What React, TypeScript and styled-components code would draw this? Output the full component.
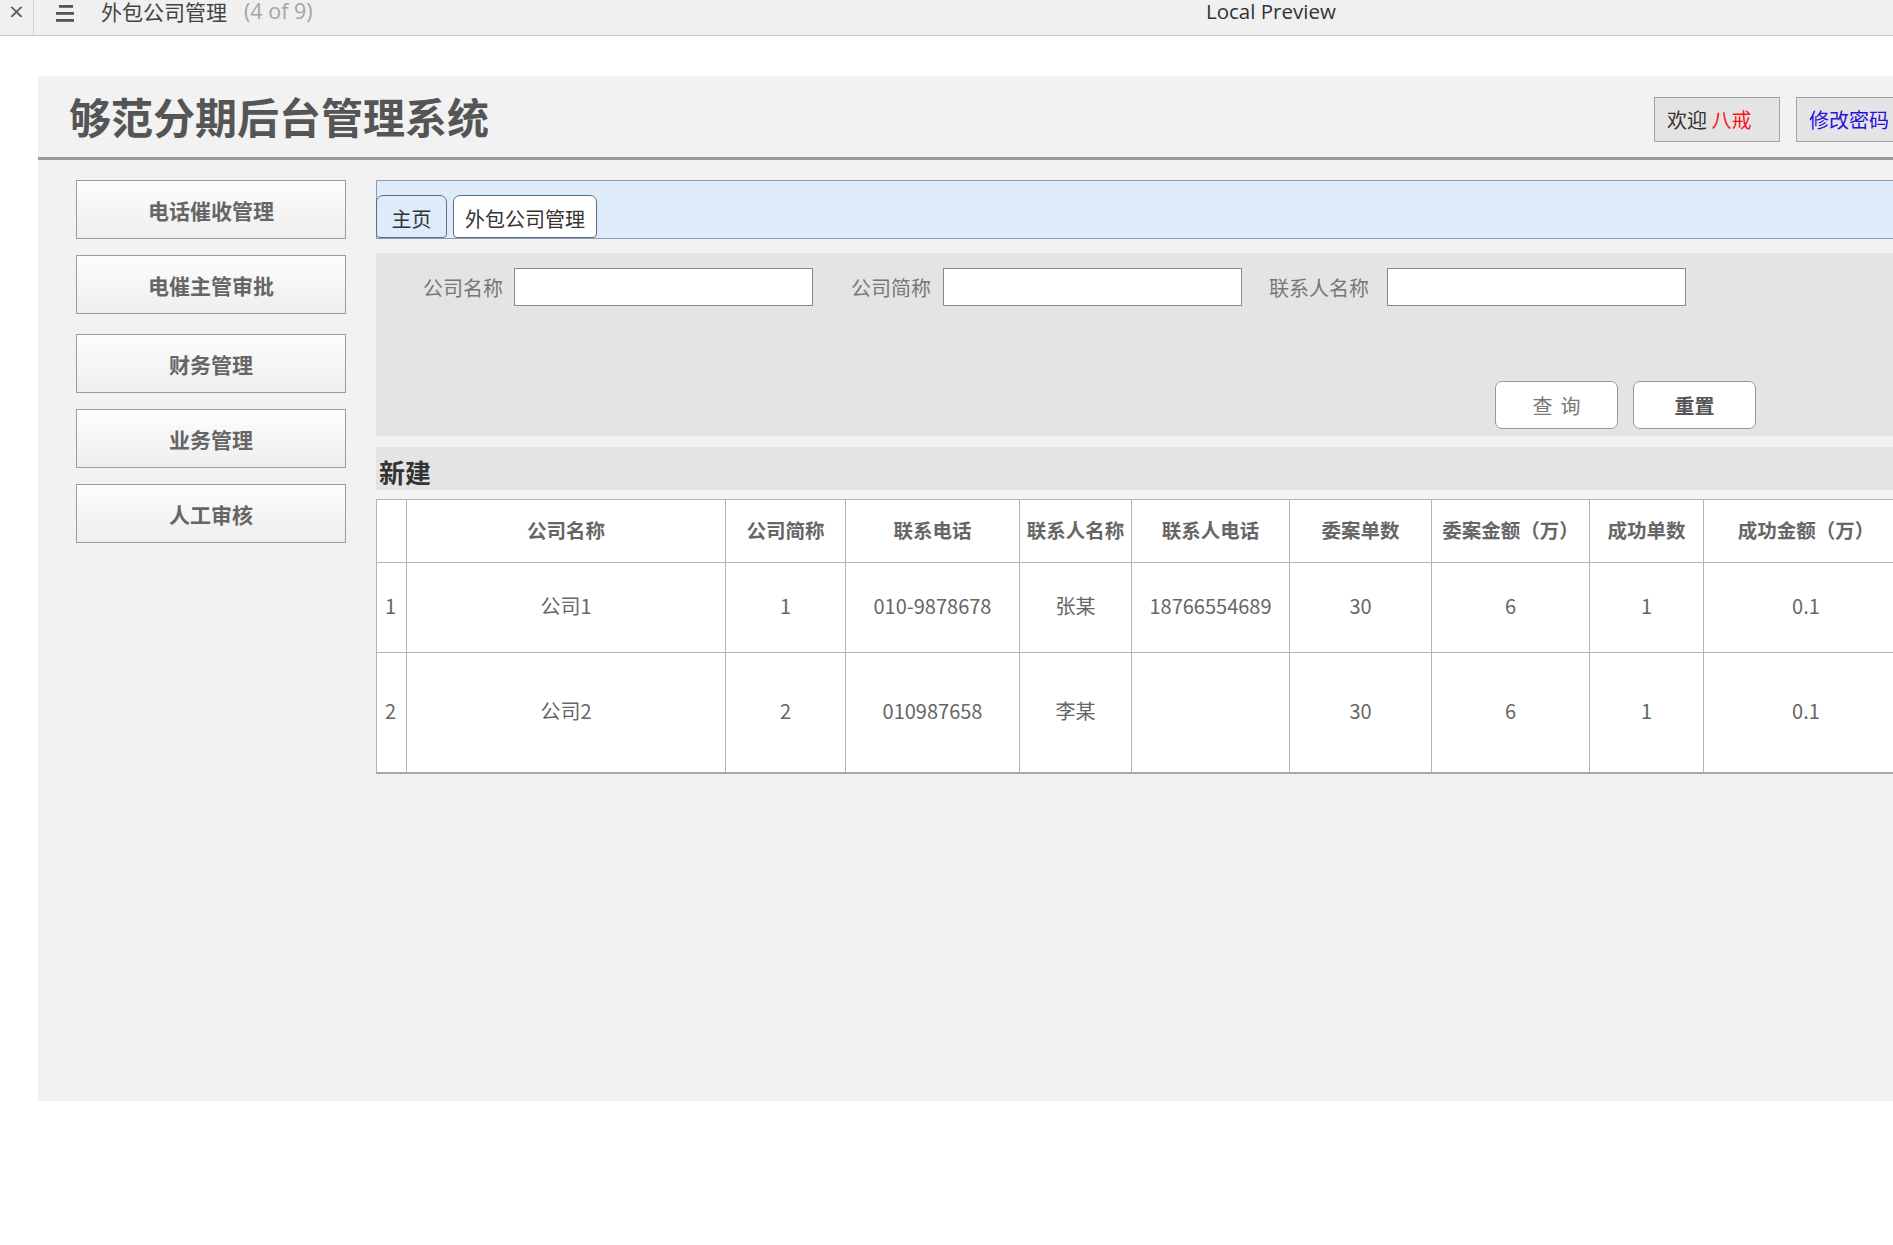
import React from "react";
import styled, { createGlobalStyle } from "styled-components";

const GlobalStyle = createGlobalStyle`
  html, body {
    margin: 0;
    padding: 0;
    background: #ffffff;
    overflow: hidden;
  }
  body {
    font-family: "Noto Sans CJK SC", "Noto Sans", sans-serif;
  }
  * { box-sizing: border-box; }
`;

const Page = styled.div`
  width: 1942px;
  min-height: 1245px;
  background: #ffffff;
`;

/* ---------- browser preview bar ---------- */
const PreviewBar = styled.div`
  height: 36px;
  background: #f0f0f0;
  border-bottom: 1px solid #c9c9c9;
  display: flex;
  align-items: flex-start;
  width: 1893px;
`;

const LeftGroup = styled.div`
  flex: 0 0 1206px;
  display: flex;
  align-items: flex-start;
  height: 35px;
`;

const CloseCell = styled.div`
  width: 34px;
  height: 35px;
  border-right: 1px solid #d2d2d2;
  font-family: "DejaVu Sans", sans-serif;
  font-size: 20px;
  line-height: 20px;
  color: #555;
  text-align: center;
  padding-top: 1px;
`;

const MenuIcon = styled.svg`
  margin-left: 21px;
  margin-top: 4px;
  flex: 0 0 auto;
`;

const PreviewTitle = styled.span`
  margin-left: 26px;
  margin-top: 0px;
  font-size: 21px;
  line-height: 22px;
  color: #444;
`;

const PreviewCount = styled.span`
  margin-left: 17px;
  margin-top: 0px;
  font-family: "Open Sans", "Noto Sans", sans-serif;
  font-size: 21.5px;
  line-height: 22px;
  color: #a4a4a4;
`;

const LocalPreview = styled.span`
  margin-top: 0px;
  font-family: "Open Sans", "Noto Sans", sans-serif;
  font-size: 20.5px;
  line-height: 22px;
  color: #333;
`;

/* ---------- main panel ---------- */
const MainPanel = styled.div`
  margin-top: 40px;
  margin-left: 38px;
  width: 1904px;
  height: 1025px;
  background: #f2f2f2;
  border-bottom: 1px solid #ececec;
`;

const Header = styled.div`
  height: 84px;
  border-bottom: 3px solid #9a9a9a;
  display: flex;
  align-items: center;
  justify-content: space-between;
  padding: 0 20px 0 31px;
`;

const SiteTitle = styled.h1`
  margin: 0;
  font-size: 42px;
  font-weight: 700;
  line-height: 1;
  color: #555;
  margin-top: -1px;
`;

const UserGroup = styled.div`
  display: flex;
  gap: 16px;
  margin-top: 6px;
`;

const UserBox = styled.div`
  width: 126px;
  height: 45px;
  background: #e4e4e4;
  border: 1px solid #a2a2a2;
  font-size: 20px;
  line-height: 43px;
  padding-left: 12px;
  color: #333;
  white-space: nowrap;
`;

const UserName = styled.span`
  color: #ff1010;
`;

const PwdLink = styled.span`
  color: #2a10e0;
`;

const Body = styled.div`
  display: flex;
  padding-top: 20px;
`;

const Sidebar = styled.nav`
  margin-left: 38px;
  width: 270px;
  display: flex;
  flex-direction: column;
  gap: 16px;
`;

const NavButton = styled.div<{ $extra?: number }>`
  height: 59px;
  margin-top: ${(p) => p.$extra || 0}px;
  border: 1px solid #9c9c9c;
  background: linear-gradient(#fdfdfd, #eeeeee);
  display: flex;
  align-items: center;
  justify-content: center;
  font-size: 21px;
  font-weight: 700;
  color: #666;
`;

const Content = styled.div`
  margin-left: 30px;
  width: 1546px;
  display: flex;
  flex-direction: column;
`;

const TabBar = styled.div`
  height: 59px;
  background: #deebfb;
  border-top: 1px solid #8c9bb0;
  border-bottom: 1px solid #8c9bb0;
  border-left: 1px solid #8c9bb0;
  display: flex;
  align-items: flex-end;
  gap: 6px;
`;

const Tab = styled.div<{ $active?: boolean }>`
  height: 43px;
  min-width: 71px;
  padding: 0 11px;
  margin-left: -1px;
  border: 1px solid #5c6c86;
  border-radius: 7px 7px 4px 4px;
  background: ${(p) => (p.$active ? "#ffffff" : "#deebfb")};
  font-size: 20px;
  line-height: 45px;
  color: #333;
  text-align: center;
  &:not(:first-child) { margin-left: 0; }
`;

const SearchPanel = styled.div`
  margin-top: 14px;
  height: 183px;
  background: #e4e4e4;
  display: flex;
  flex-direction: column;
  justify-content: space-between;
  padding: 15px 166px 7px 47px;
`;

const FieldRow = styled.div`
  display: flex;
  align-items: center;
`;

const Field = styled.label<{ $gap?: number }>`
  display: flex;
  align-items: center;
  margin-right: ${(p) => p.$gap || 0}px;
`;

const FieldLabel = styled.span<{ $space: number }>`
  font-size: 20px;
  color: #777;
  margin-right: ${(p) => p.$space}px;
  white-space: nowrap;
`;

const TextInput = styled.input`
  width: 299px;
  height: 38px;
  border: 1px solid #8a8a8a;
  background: #fff;
  outline: none;
  padding: 0 4px;
  font-size: 18px;
`;

const ButtonRow = styled.div`
  display: flex;
  justify-content: flex-end;
  gap: 15px;
`;

const ActionButton = styled.button<{ $bold?: boolean }>`
  width: 123px;
  height: 48px;
  border: 1px solid #999;
  border-radius: 7px;
  background: #fff;
  font-family: "Noto Sans CJK SC", sans-serif;
  font-size: 20px;
  font-weight: ${(p) => (p.$bold ? 700 : 400)};
  color: ${(p) => (p.$bold ? "#555" : "#777")};
  letter-spacing: ${(p) => (p.$bold ? "0" : "8px")};
  text-indent: ${(p) => (p.$bold ? "0" : "8px")};
  padding: 0;
`;

const NewBar = styled.div`
  margin-top: 11px;
  height: 43px;
  background: #e4e4e4;
  font-size: 26px;
  font-weight: 700;
  color: #333;
  line-height: 43px;
  padding: 3px 0 0 3px;
`;

const Table = styled.table`
  margin-top: 9px;
  border-collapse: collapse;
  table-layout: fixed;
  width: 1532px;
  background: #fff;
  border: 1px solid #a8a8a8;
  border-bottom: 2px solid #a8a8a8;
`;

const HeadCell = styled.th`
  height: 63px;
  border: 1px solid #b4b4b4;
  font-size: 19.5px;
  font-weight: 700;
  color: #666;
  text-align: center;
  padding: 0 0 4px 0;
  white-space: nowrap;
`;

const Cell = styled.td<{ $index?: boolean }>`
  border: 1px solid #b4b4b4;
  font-size: 20px;
  color: #666;
  text-align: ${(p) => (p.$index ? "left" : "center")};
  padding: 0 0 4px ${(p) => (p.$index ? "8px" : "0")};
  white-space: nowrap;
`;

const Row = styled.tr<{ $h: number }>`
  height: ${(p) => p.$h}px;
`;

const columns = [30, 319, 120, 174, 112, 158, 142, 158, 114, 205];
const headers = [
  "",
  "公司名称",
  "公司简称",
  "联系电话",
  "联系人名称",
  "联系人电话",
  "委案单数",
  "委案金额（万）",
  "成功单数",
  "成功金额（万）",
];

const rows = [
  { h: 90, cells: ["1", "公司1", "1", "010-9878678", "张某", "18766554689", "30", "6", "1", "0.1"] },
  { h: 120, cells: ["2", "公司2", "2", "010987658", "李某", "", "30", "6", "1", "0.1"] },
];

const navItems = [
  { label: "电话催收管理", extra: 0 },
  { label: "电催主管审批", extra: 0 },
  { label: "财务管理", extra: 4 },
  { label: "业务管理", extra: 0 },
  { label: "人工审核", extra: 0 },
];

export default function App() {
  return (
    <>
      <GlobalStyle />
      <Page>
        <PreviewBar>
          <LeftGroup>
            <CloseCell>×</CloseCell>
            <MenuIcon width="20" height="20" viewBox="0 0 20 20">
              <rect x="4" y="1" width="14" height="2.8" fill="#555" />
              <rect x="1" y="8" width="18" height="2.8" fill="#555" />
              <rect x="1" y="15" width="18" height="2.8" fill="#555" />
            </MenuIcon>
            <PreviewTitle>外包公司管理</PreviewTitle>
            <PreviewCount>(4 of 9)</PreviewCount>
          </LeftGroup>
          <LocalPreview>Local Preview</LocalPreview>
        </PreviewBar>

        <MainPanel>
          <Header>
            <SiteTitle>够范分期后台管理系统</SiteTitle>
            <UserGroup>
              <UserBox>
                欢迎 <UserName>八戒</UserName>
              </UserBox>
              <UserBox>
                <PwdLink>修改密码</PwdLink>
              </UserBox>
            </UserGroup>
          </Header>

          <Body>
            <Sidebar>
              {navItems.map((n) => (
                <NavButton key={n.label} $extra={n.extra}>
                  {n.label}
                </NavButton>
              ))}
            </Sidebar>

            <Content>
              <TabBar>
                <Tab>主页</Tab>
                <Tab $active>外包公司管理</Tab>
              </TabBar>

              <SearchPanel>
                <FieldRow>
                  <Field $gap={38}>
                    <FieldLabel $space={11}>公司名称</FieldLabel>
                    <TextInput />
                  </Field>
                  <Field $gap={27}>
                    <FieldLabel $space={12}>公司简称</FieldLabel>
                    <TextInput />
                  </Field>
                  <Field>
                    <FieldLabel $space={18}>联系人名称</FieldLabel>
                    <TextInput />
                  </Field>
                </FieldRow>
                <ButtonRow>
                  <ActionButton>查询</ActionButton>
                  <ActionButton $bold>重置</ActionButton>
                </ButtonRow>
              </SearchPanel>

              <NewBar>新建</NewBar>

              <Table>
                <colgroup>
                  {columns.map((w, i) => (
                    <col key={i} style={{ width: w }} />
                  ))}
                </colgroup>
                <thead>
                  <tr>
                    {headers.map((h, i) => (
                      <HeadCell key={i}>{h}</HeadCell>
                    ))}
                  </tr>
                </thead>
                <tbody>
                  {rows.map((r, ri) => (
                    <Row key={ri} $h={r.h}>
                      {r.cells.map((c, ci) => (
                        <Cell key={ci} $index={ci === 0}>
                          {c}
                        </Cell>
                      ))}
                    </Row>
                  ))}
                </tbody>
              </Table>
            </Content>
          </Body>
        </MainPanel>
      </Page>
    </>
  );
}
